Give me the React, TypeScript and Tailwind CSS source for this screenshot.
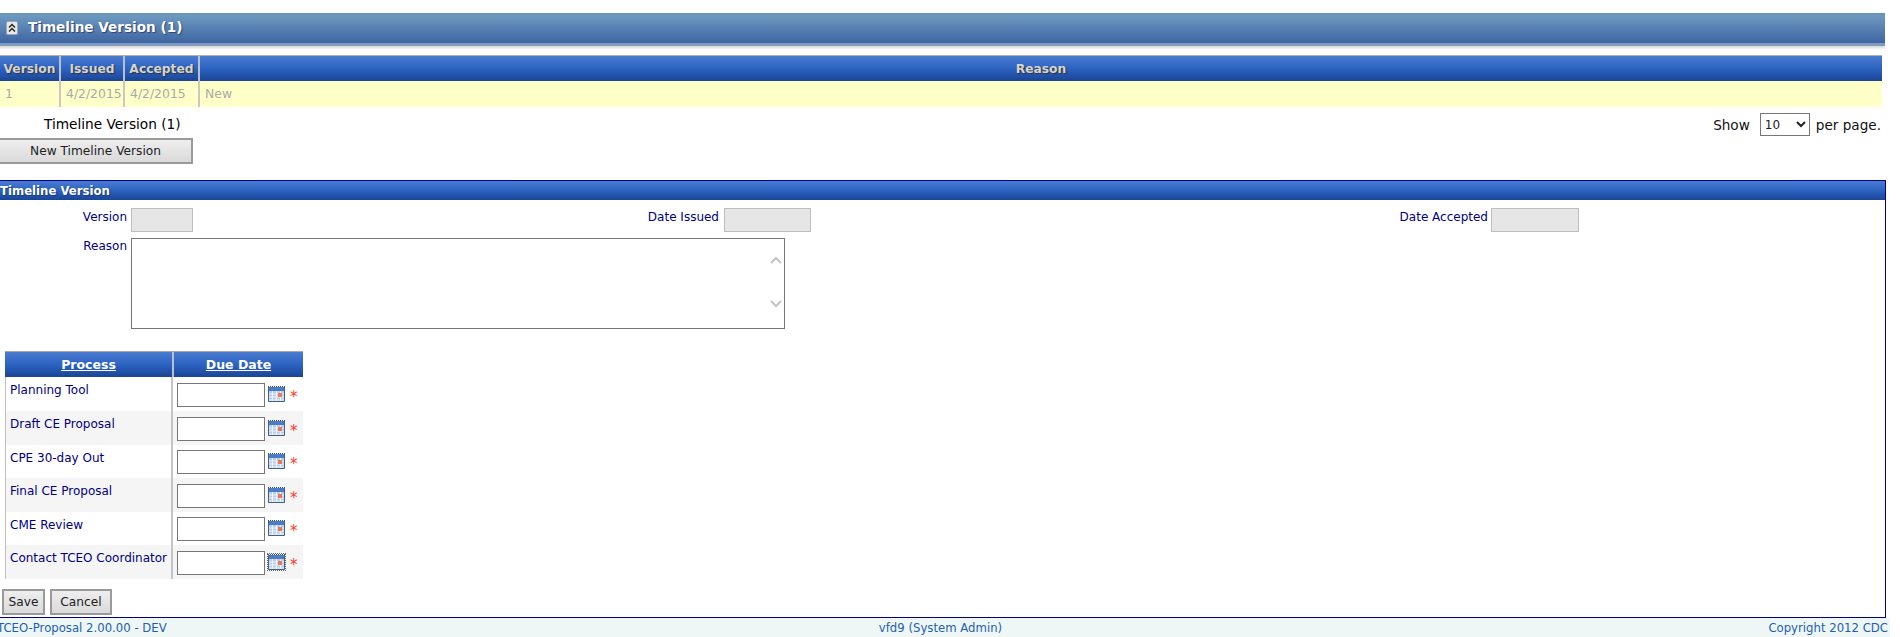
const headerBar = "bg-gradient-to-b from-[#4a7ccf] via-[#2c62c2] to-[#1a4595]";
const headerText = "font-bold text-[12.3px] text-[#d4d4d4] [text-shadow:1px_1px_1px_#333333]";

const rows = [
  { name: "Planning Tool", h: "h-[34px]", alt: false },
  { name: "Draft CE Proposal", h: "h-[34px]", alt: true },
  { name: "CPE 30-day Out", h: "h-[33px]", alt: false },
  { name: "Final CE Proposal", h: "h-[34px]", alt: true },
  { name: "CME Review", h: "h-[33px]", alt: false },
  { name: "Contact TCEO Coordinator", h: "h-[34px]", alt: true },
];

const CollapseIcon = () => (
  <svg width="12" height="14" viewBox="0 0 12 14" className="shrink-0">
    <rect x="0.5" y="0.5" width="11" height="13" rx="1.5" fill="#e8e8e8" stroke="#9aa5b5" />
    <path d="M3 6.5 L6 3.5 L9 6.5 M3 10.5 L6 7.5 L9 10.5" fill="none" stroke="#222" strokeWidth="1.4" />
  </svg>
);

const CalendarIcon = () => (
  <svg width="17" height="16" viewBox="0 0 17 16" className="block shrink-0">
    <rect x="0" y="1" width="17" height="15" fill="#b9cde8" />
    <path d="M0 0.5H17" stroke="#39506e" strokeWidth="1" strokeDasharray="1 1" />
    <rect x="0" y="1" width="17" height="4" fill="#4a7cc8" />
    <path d="M1 8H16M1 11H16M1 14H16M4.5 5V15M8.5 5V15M12.5 5V15" stroke="#eef3fa" strokeWidth="1" />
    <rect x="10" y="7" width="4" height="4" fill="#e8785a" />
    <path d="M0.5 1V15.5H16.5V1" fill="none" stroke="#46607f" />
  </svg>
);

const DueRow = ({ name, h, alt, last }: { name: string; h: string; alt: boolean; last: boolean }) => (
  <div className={`flex ${h} ${alt ? "bg-[#f5f5f5]" : "bg-white"}`}>
    <div className="w-[166px] pl-[4px] pt-[5px] border-l border-[#bdbdbd] text-[12px] leading-[16px] text-[#000080] whitespace-nowrap">
      {name}
    </div>
    <div className="flex-1 flex items-center border-l-2 border-[#c4c4c4] pl-[4px] pt-[1px]">
      <input className="w-[88px] h-[24px] border border-[#767676] bg-white" />
      <span className={`ml-[3px] -mt-[2px] ${last ? "outline-1 outline-dotted outline-[#666]" : ""}`}>
        <CalendarIcon />
      </span>
      <span className="ml-[5px] mt-[5px] text-[15px] leading-none text-[#ff3a2a]">*</span>
    </div>
  </div>
);

const FormButton = ({ label, className }: { label: string; className: string }) => (
  <button
    className={`h-[26px] border-2 border-[#9a9a9a] bg-gradient-to-b from-[#eeeeee] to-[#dadada] text-[12.2px] text-[#222] ${className}`}
  >
    {label}
  </button>
);

export default function App() {
  return (
    <div className="relative w-[1900px] h-[637px] overflow-hidden bg-white pt-[13px] font-['DejaVu_Sans',Verdana,sans-serif]">
      {/* Collapsible title bar */}
      <div className="w-[1885px]">
        <div className="h-[33px] flex items-center pl-[6px] pb-[3px] gap-[10px] border-t-2 border-[#6a93b8] border-b-[3px] border-b-[#7f9cc0] bg-gradient-to-b from-[#6f9abf] to-[#3f65a3]">
          <CollapseIcon />
          <span className="font-bold text-[13.6px] text-white [text-shadow:1px_1px_1px_#2c4470]">Timeline Version (1)</span>
        </div>
        <div className="h-[4px] bg-gradient-to-b from-[#d8d8d8] to-white" />
      </div>

      {/* Version list */}
      <div className="w-[1882px] mt-[5px]">
        <div className={`flex h-[26px] border-t border-[#b0b0b0] items-center text-center ${headerBar}`}>
          <div className={`w-[61px] leading-[25px] border-r-2 border-[#b8c0cc] ${headerText}`}><span className="relative top-px">Version</span></div>
          <div className={`w-[64px] leading-[25px] border-r-2 border-[#b8c0cc] ${headerText}`}><span className="relative top-px">Issued</span></div>
          <div className={`w-[75px] leading-[25px] border-r-2 border-[#b8c0cc] ${headerText}`}><span className="relative top-px">Accepted</span></div>
          <div className={`flex-1 ${headerText}`}><span className="relative top-px">Reason</span></div>
        </div>
        <div className="flex h-[26px] bg-[#ffffc8] text-[12.4px] leading-[26px] text-[#aaaaaa]">
          <div className="w-[61px] pl-[5px] border-r-2 border-[#c8c8c8]">1</div>
          <div className="w-[64px] pl-[5px] border-r-2 border-[#c8c8c8]">4/2/2015</div>
          <div className="w-[75px] pl-[5px] border-r-2 border-[#c8c8c8]">4/2/2015</div>
          <div className="flex-1 pl-[5px]">New</div>
        </div>
      </div>

      {/* Pager and new button */}
      <div className="w-[1881px] flex justify-between mt-[6px] h-[67px]">
        <div>
          <div className="pl-[44px] text-[13.7px] leading-[22px] text-black">Timeline Version (1)</div>
          <FormButton label="New Timeline Version" className="w-[195px] -ml-[2px] mt-[3px]" />
        </div>
        <div className="flex items-start text-[13.6px] text-[#111]">
          <span className="mt-[2px]">Show</span>
          <select className="ml-[10px] w-[50px] h-[23px] border border-[#767676] text-[12px] bg-white text-[#222]">
            <option>10</option>
          </select>
          <span className="ml-[6px] mt-[2px]">per page.</span>
        </div>
      </div>

      {/* Edit panel */}
      <div className="w-[1886px] h-[438px] border-t border-r border-b border-[#000090]">
        <div className={`h-[19px] leading-[20px] font-bold text-[11.7px] text-white [text-shadow:1px_1px_1px_#1a3a7a] ${headerBar}`}>
          Timeline Version
        </div>

        <div className="flex mt-[8px] h-[24px] text-[12px] text-[#000080]">
          <span className="w-[127px] text-right leading-[18px]">Version</span>
          <input disabled className="ml-[4px] w-[62px] h-[24px] border border-[#bdbdbd] bg-[#e6e6e6]" />
          <span className="w-[526px] text-right leading-[18px]">Date Issued</span>
          <input disabled className="ml-[5px] w-[87px] h-[24px] border border-[#bdbdbd] bg-[#e6e6e6]" />
          <span className="w-[677px] text-right leading-[18px]">Date Accepted</span>
          <input disabled className="ml-[3px] w-[88px] h-[24px] border border-[#bdbdbd] bg-[#e6e6e6]" />
        </div>

        <div className="flex mt-[6px] text-[12px] text-[#000080]">
          <span className="w-[127px] text-right leading-[16px]">Reason</span>
          <div className="relative ml-[4px]">
            <textarea className="block w-[654px] h-[91px] border border-[#767676] bg-white resize-none" />
            <svg width="12" height="8" viewBox="0 0 12 8" className="absolute right-[3px] top-[18px]">
              <path d="M1 7 L6 2 L11 7" fill="none" stroke="#c4c4c4" strokeWidth="2" />
            </svg>
            <svg width="12" height="8" viewBox="0 0 12 8" className="absolute right-[3px] bottom-[21px]">
              <path d="M1 1 L6 6 L11 1" fill="none" stroke="#c4c4c4" strokeWidth="2" />
            </svg>
          </div>
        </div>

        {/* Process due dates */}
        <div className="w-[298px] ml-[5px] mt-[22px]">
          <div className={`flex h-[26px] border-t border-[#a8a8a8] text-[12.5px] font-bold text-white underline ${headerBar}`}>
            <div className="w-[167px] text-center leading-[25px]">Process</div>
            <div className="flex-1 text-center leading-[25px] border-l-2 border-[#b8c0cc]">Due Date</div>
          </div>
          {rows.map((r, i) => (
            <DueRow key={r.name} name={r.name} h={r.h} alt={r.alt} last={i === rows.length - 1} />
          ))}
        </div>

        <div className="flex gap-[5px] ml-[2px] mt-[10px]">
          <FormButton label="Save" className="w-[43px]" />
          <FormButton label="Cancel" className="w-[62px]" />
        </div>
      </div>

      {/* Footer */}
      <div className="w-[1890px] h-[19px] bg-[#eef7f6] grid grid-cols-3 text-[11.7px] leading-[20px] text-[#1f5fae] pr-[2px] overflow-hidden">
        <span className="-ml-[3px]">TCEO-Proposal 2.00.00 - DEV</span>
        <span className="text-center pr-[7px]">vfd9 (System Admin)</span>
        <span className="text-right">Copyright 2012 CDC</span>
      </div>
    </div>
  );
}
